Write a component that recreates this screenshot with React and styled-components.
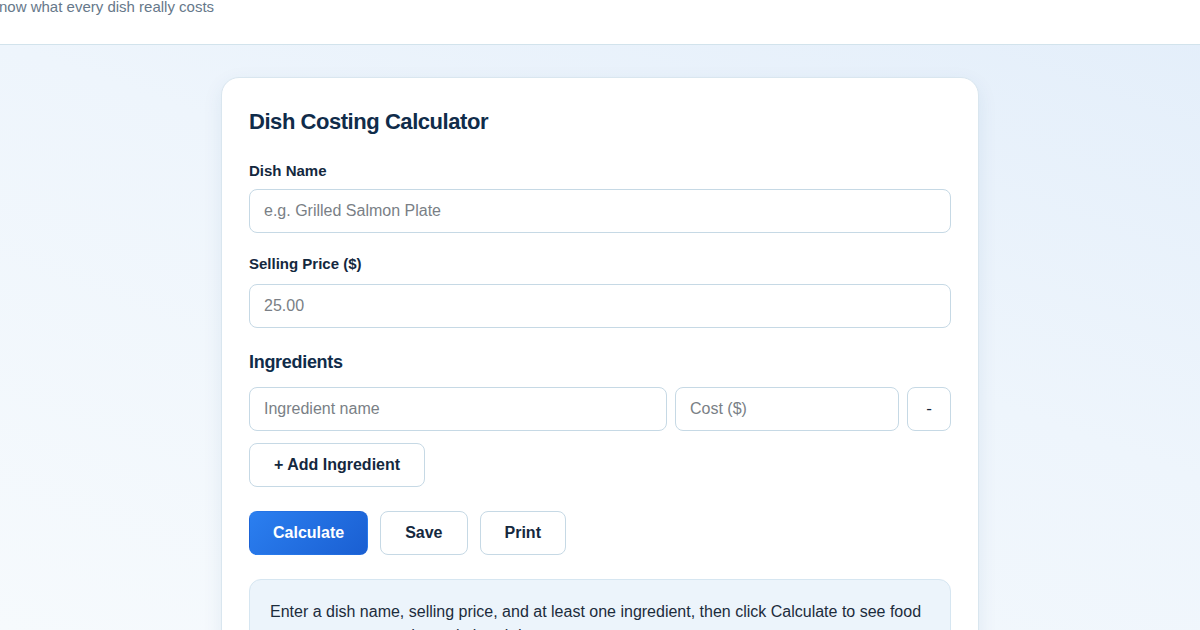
import React from "react";
import styled, { createGlobalStyle } from "styled-components";

const Global = createGlobalStyle`
  html, body { margin: 0; padding: 0; }
  body {
    font-family: "Liberation Sans", Arial, sans-serif;
    background: #f3f8fc;
    overflow: hidden;
  }
  * { box-sizing: border-box; }
`;

const Page = styled.div`
  width: 1200px;
  height: 630px;
  display: flex;
  flex-direction: column;
  overflow: hidden;
  background: linear-gradient(200deg, #e3eefa 0%, #eef5fc 45%, #f6fafd 100%);
`;

const Header = styled.header`
  flex: 0 0 45px;
  height: 45px;
  background: #ffffff;
  border-bottom: 1px solid #d2e3ec;
  display: flex;
  align-items: flex-start;
  overflow: hidden;
`;

const Tagline = styled.p`
  margin: -2px 0 0 -11px;
  font-size: 15px;
  line-height: 18px;
  color: #66788a;
  white-space: nowrap;
`;

const Main = styled.main`
  flex: 1 1 auto;
  min-height: 0;
  display: flex;
  justify-content: center;
  align-items: flex-start;
  padding-top: 32px;
  overflow: hidden;
`;

const Card = styled.section`
  width: 758px;
  flex: none;
  background: #ffffff;
  border: 1px solid #d9e6ef;
  border-radius: 18px;
  box-shadow: 0 6px 20px rgba(30, 80, 130, 0.08);
  padding: 29px 27px 28px;
  display: flex;
  flex-direction: column;
`;

const Title = styled.h1`
  margin: 1px 0 26px;
  font-size: 22px;
  line-height: 28px;
  font-weight: 700;
  color: #102c4a;
  letter-spacing: -0.45px;
`;

const Label = styled.label`
  display: block;
  font-size: 15px;
  line-height: 18px;
  font-weight: 700;
  color: #14283e;
  margin-bottom: ${(p) => p.$mb || 10}px;
`;

const Field = styled.div`
  display: flex;
  flex-direction: column;
  margin-bottom: ${(p) => p.$mb || 22}px;
`;

const Input = styled.input`
  height: 44px;
  width: ${(p) => p.$w || "100%"};
  flex: ${(p) => p.$flex || "none"};
  border: 1px solid #c6d9e5;
  border-radius: 8px;
  padding: 0 14px;
  font-family: inherit;
  font-size: 16px;
  color: #1e2e3e;
  background: #fff;
  outline: none;
  &::placeholder { color: #7a7f86; }
`;

const SectionTitle = styled.h2`
  margin: 0 0 14px;
  font-size: 18px;
  line-height: 22px;
  font-weight: 700;
  color: #102c4a;
  letter-spacing: -0.3px;
`;

const Row = styled.div`
  display: flex;
  gap: 8px;
  margin-bottom: 12px;
`;

const Button = styled.button`
  height: 44px;
  padding: 0 ${(p) => p.$px || 24}px;
  border-radius: 8px;
  font-family: inherit;
  font-size: 16px;
  font-weight: 700;
  cursor: pointer;
  border: 1px solid ${(p) => (p.$primary ? "transparent" : "#c6d9e5")};
  color: ${(p) => (p.$primary ? "#ffffff" : "#14283e")};
  background: ${(p) =>
    p.$primary ? "linear-gradient(135deg, #2b7ff0 0%, #1a5fd2 100%)" : "#ffffff"};
  flex: none;
`;

const RemoveButton = styled(Button)`
  width: 44px;
  padding: 0;
  font-weight: 400;
  font-size: 17px;
`;

const Actions = styled.div`
  display: flex;
  gap: 12px;
  margin-top: 24px;
  margin-bottom: 24px;
`;

const AddRow = styled.div`
  display: flex;
`;

const Info = styled.div`
  background: #ecf4fb;
  border: 1px solid #d6e6f1;
  border-radius: 12px;
  padding: 20px 20px;
  font-size: 16px;
  line-height: 24px;
  color: #1c2c3c;
`;

export default function App() {
  return (
    <>
      <Global />
      <Page>
        <Header>
          <Tagline>Know what every dish really costs</Tagline>
        </Header>
        <Main>
          <Card>
            <Title>Dish Costing Calculator</Title>
            <Field>
              <Label $mb={9}>Dish Name</Label>
              <Input placeholder="e.g. Grilled Salmon Plate" />
            </Field>
            <Field $mb={23}>
              <Label $mb={11}>Selling Price ($)</Label>
              <Input placeholder="25.00" />
            </Field>
            <SectionTitle>Ingredients</SectionTitle>
            <Row>
              <Input $flex="0 0 418px" placeholder="Ingredient name" />
              <Input $flex="0 0 224px" placeholder="Cost ($)" />
              <RemoveButton>-</RemoveButton>
            </Row>
            <AddRow>
              <Button>+ Add Ingredient</Button>
            </AddRow>
            <Actions>
              <Button $primary $px={23}>Calculate</Button>
              <Button>Save</Button>
              <Button>Print</Button>
            </Actions>
            <Info>
              Enter a dish name, selling price, and at least one ingredient, then click Calculate to see food
              cost percentage and margin breakdown.
            </Info>
          </Card>
        </Main>
      </Page>
    </>
  );
}
